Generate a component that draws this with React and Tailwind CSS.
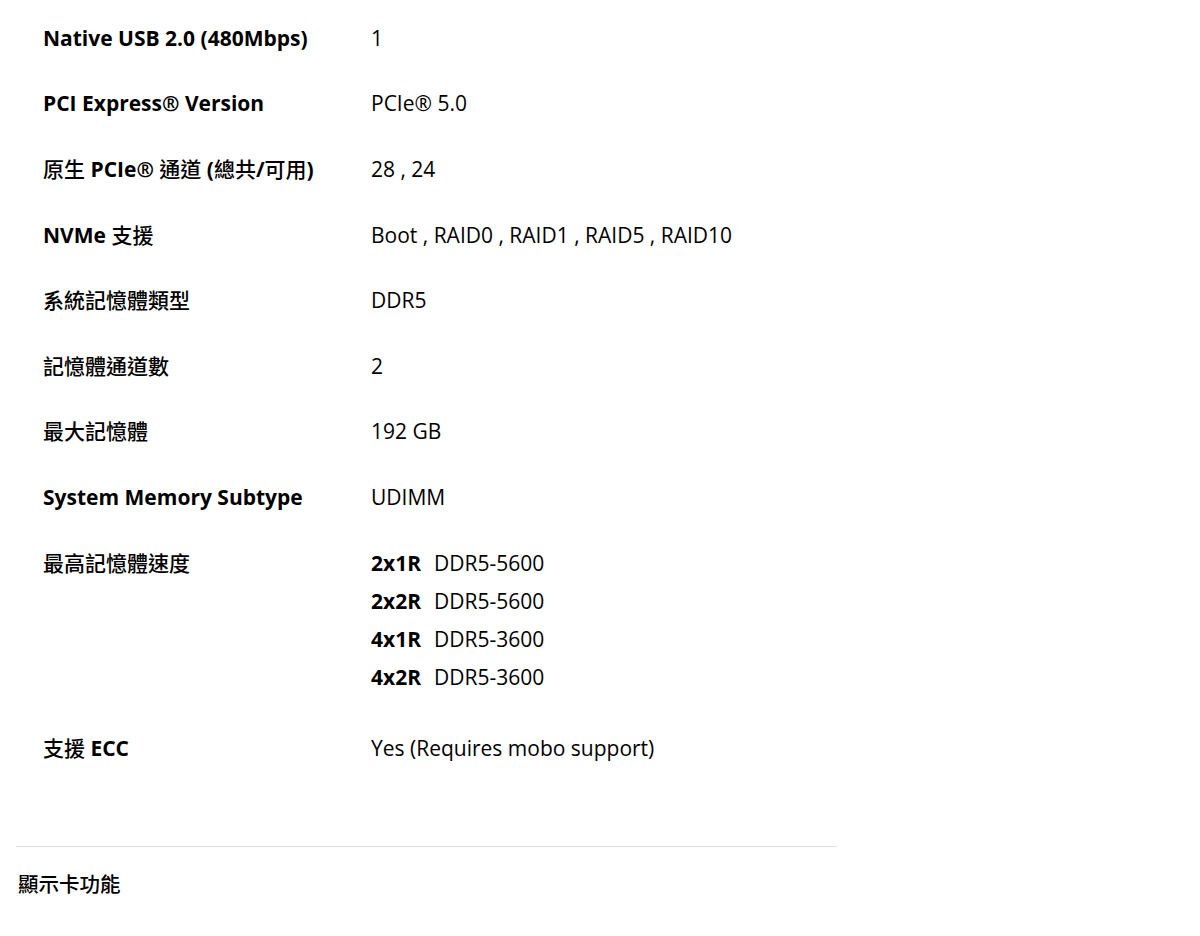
const specs = [
  { label: 'Native USB 2.0 (480Mbps)', value: '1' },
  { label: 'PCI Express® Version', value: 'PCIe® 5.0' },
  { label: '原生 PCIe® 通道 (總共/可用)', value: '28 , 24' },
  { label: 'NVMe 支援', value: 'Boot , RAID0 , RAID1 , RAID5 , RAID10' },
  { label: '系統記憶體類型', value: 'DDR5' },
  { label: '記憶體通道數', value: '2' },
  { label: '最大記憶體', value: '192 GB' },
  { label: 'System Memory Subtype', value: 'UDIMM' },
  {
    label: '最高記憶體速度',
    speeds: [
      ['2x1R', 'DDR5-5600'],
      ['2x2R', 'DDR5-5600'],
      ['4x1R', 'DDR5-3600'],
      ['4x2R', 'DDR5-3600'],
    ],
  },
  { label: '支援 ECC', value: 'Yes (Requires mobo support)' },
];

// CJK glyphs render a bit lighter than the Latin bold in the reference
function Label({ text }) {
  const parts = text.split(/([\u3400-\u9fff]+)/).filter(Boolean);
  return parts.map((part, i) =>
    /[\u3400-\u9fff]/.test(part) ? (
      <span key={i} className="font-medium">{part}</span>
    ) : (
      <span key={i}>{part}</span>
    )
  );
}

export default function App() {
  return (
    <div
      className="min-h-[936px] bg-white text-black"
      style={{ fontFamily: '"Open Sans", "Noto Sans CJK TC", sans-serif' }}
    >
      <div className="w-[837px] pl-4 pt-[5px]">
        <div className="pl-[27px]">
          {specs.map((spec) => (
            <div
              key={spec.label}
              className={`flex text-[21px] leading-[28px] ${spec.speeds ? 'pt-[18.8px] pb-[24.6px]' : 'py-[18.8px]'}`}
            >
              <div className="w-[328px] shrink-0 font-bold">
                <Label text={spec.label} />
              </div>
              {spec.speeds ? (
                <div className="flex flex-col gap-[10px]">
                  {spec.speeds.map(([rank, speed]) => (
                    <div key={rank} className="flex gap-[13px]">
                      <span className="font-bold">{rank}</span>
                      <span>{speed}</span>
                    </div>
                  ))}
                </div>
              ) : (
                <div>{spec.value}</div>
              )}
            </div>
          ))}
        </div>
        <div className="mt-[65px] border-t border-[#e0e0e0]" />
        <div className="pt-[23px] pl-[2px] text-[20.5px] font-medium leading-[28px]">顯示卡功能</div>
      </div>
    </div>
  );
}
